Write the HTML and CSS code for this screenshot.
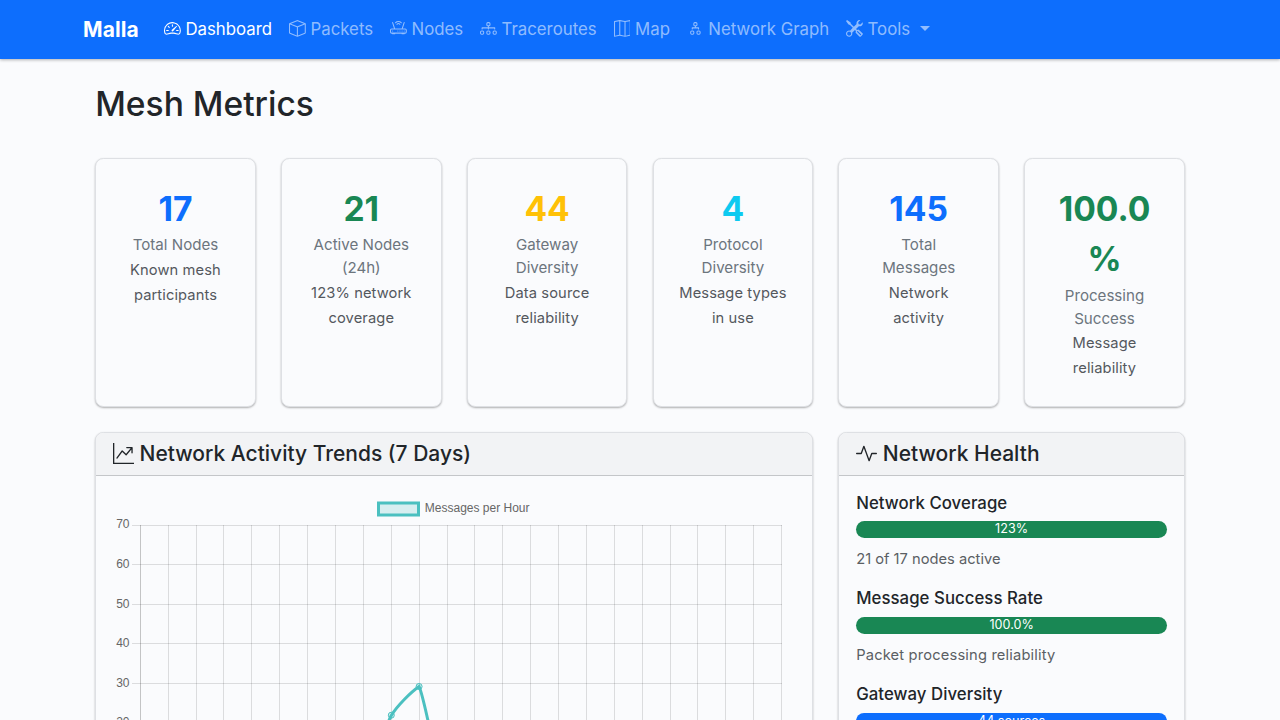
FILE: index.html
```html
<!DOCTYPE html>
<html lang="en">
<head>
<meta charset="utf-8">
<title>Malla - Mesh Metrics</title>
<link rel="stylesheet" href="styles.css">
</head>
<body>
<nav class="navbar">
  <div class="container navbar-inner">
    <a class="brand">Malla</a>
    <ul class="nav">
      <li class="nav-link active"><svg class="bi" viewBox="0 0 16 16"><path d="M8 4a.5.5 0 0 1 .5.5V6a.5.5 0 0 1-1 0V4.5A.5.5 0 0 1 8 4M3.732 5.732a.5.5 0 0 1 .707 0l.915.914a.5.5 0 1 1-.708.708l-.914-.915a.5.5 0 0 1 0-.707M2 10a.5.5 0 0 1 .5-.5h1.586a.5.5 0 0 1 0 1H2.5A.5.5 0 0 1 2 10m9.5 0a.5.5 0 0 1 .5-.5h1.5a.5.5 0 0 1 0 1H12a.5.5 0 0 1-.5-.5m.754-4.246a.39.39 0 0 0-.527-.02L7.547 9.31a.91.91 0 1 0 1.302 1.258l3.434-4.297a.39.39 0 0 0-.029-.518z"/><path fill-rule="evenodd" d="M0 10a8 8 0 1 1 15.547 2.661c-.442 1.253-1.845 1.602-2.932 1.25C11.309 13.488 9.475 13 8 13c-1.474 0-3.31.488-4.615.911-1.087.352-2.49.003-2.932-1.25A8 8 0 0 1 0 10m8-7a7 7 0 0 0-6.603 9.329c.203.575.923.876 1.68.63C4.397 12.533 6.358 12 8 12s3.604.532 4.923.96c.757.245 1.477-.056 1.68-.631A7 7 0 0 0 8 3"/></svg> Dashboard</li>
      <li class="nav-link"><svg class="bi" viewBox="0 0 16 16"><path d="M8.186 1.113a.5.5 0 0 0-.372 0L1.846 3.5 8 5.961 14.154 3.5zM15 4.239l-6.5 2.6v7.922l6.5-2.6V4.24zM7.5 14.762V6.838L1 4.239v7.923zM7.443.184a1.5 1.5 0 0 1 1.114 0l7.129 2.852A.5.5 0 0 1 16 3.5v8.662a1 1 0 0 1-.629.928l-7.185 2.874a.5.5 0 0 1-.372 0L.63 13.09a1 1 0 0 1-.63-.928V3.5a.5.5 0 0 1 .314-.464z"/></svg> Packets</li>
      <li class="nav-link"><svg class="bi" viewBox="0 0 16 16"><path d="M5.525 3.025a3.5 3.5 0 0 1 4.95 0 .5.5 0 1 0 .707-.707 4.5 4.5 0 0 0-6.364 0 .5.5 0 0 0 .707.707"/><path d="M6.94 4.44a1.5 1.5 0 0 1 2.12 0 .5.5 0 0 0 .708-.708 2.5 2.5 0 0 0-3.536 0 .5.5 0 0 0 .707.707ZM2.5 11a.5.5 0 1 1 0-1 .5.5 0 0 1 0 1m4.5-.5a.5.5 0 1 0 1 0 .5.5 0 0 0-1 0m2.5.5a.5.5 0 1 1 0-1 .5.5 0 0 1 0 1m1.5-.5a.5.5 0 1 0 1 0 .5.5 0 0 0-1 0m2 0a.5.5 0 1 0 1 0 .5.5 0 0 0-1 0"/><path d="M2.974 2.342a.5.5 0 1 0-.948.316L3.806 8H1.5A1.5 1.5 0 0 0 0 9.5v2A1.5 1.5 0 0 0 1.5 13H2a.5.5 0 0 0 .5.5h2A.5.5 0 0 0 5 13h6a.5.5 0 0 0 .5.5h2a.5.5 0 0 0 .5-.5h.5a1.5 1.5 0 0 0 1.5-1.5v-2A1.5 1.5 0 0 0 14.5 8h-2.306l1.78-5.342a.5.5 0 1 0-.948-.316L11.14 8H4.86zM14.5 9a.5.5 0 0 1 .5.5v2a.5.5 0 0 1-.5.5h-13a.5.5 0 0 1-.5-.5v-2a.5.5 0 0 1 .5-.5z"/></svg> Nodes</li>
      <li class="nav-link"><svg class="bi" viewBox="0 0 16 16"><path fill-rule="evenodd" d="M6 3.5A1.5 1.5 0 0 1 7.5 2h1A1.5 1.5 0 0 1 10 3.5v1A1.5 1.5 0 0 1 8.5 6v1H14a.5.5 0 0 1 .5.5v1a.5.5 0 0 1-1 0V8h-5v.5a.5.5 0 0 1-1 0V8h-5v.5a.5.5 0 0 1-1 0v-1A.5.5 0 0 1 2 7h5.5V6A1.5 1.5 0 0 1 6 4.5zM8.5 5a.5.5 0 0 0 .5-.5v-1a.5.5 0 0 0-.5-.5h-1a.5.5 0 0 0-.5.5v1a.5.5 0 0 0 .5.5zM0 11.5A1.5 1.5 0 0 1 1.5 10h1A1.5 1.5 0 0 1 4 11.5v1A1.5 1.5 0 0 1 2.5 14h-1A1.5 1.5 0 0 1 0 12.5zm1.5-.5a.5.5 0 0 0-.5.5v1a.5.5 0 0 0 .5.5h1a.5.5 0 0 0 .5-.5v-1a.5.5 0 0 0-.5-.5zm4.5.5A1.5 1.5 0 0 1 7.5 10h1a1.5 1.5 0 0 1 1.5 1.5v1A1.5 1.5 0 0 1 8.500 14h-1A1.5 1.5 0 0 1 6 12.500zm1.500-.5a.5.5 0 0 0-.5.5v1a.5.5 0 0 0 .5.5h1a.5.5 0 0 0 .5-.5v-1a.5.5 0 0 0-.5-.5zm4.500.5a1.5 1.5 0 0 1 1.500-1.500h1a1.500 1.500 0 0 1 1.500 1.500v1a1.500 1.500 0 0 1-1.500 1.500h-1a1.500 1.500 0 0 1-1.500-1.500zm1.500-.5a.5.5 0 0 0-.5.5v1a.5.5 0 0 0 .5.5h1a.5.5 0 0 0 .5-.5v-1a.5.5 0 0 0-.5-.5z"/></svg> Traceroutes</li>
      <li class="nav-link"><svg class="bi" viewBox="0 0 16 16"><path fill-rule="evenodd" d="M15.817.113A.5.5 0 0 1 16 .5v14a.5.5 0 0 1-.402.49l-5 1a.5.5 0 0 1-.196 0L5.500 15.010l-4.902.980A.5.5 0 0 1 0 15.500v-14a.5.5 0 0 1 .402-.490l5-1a.5.5 0 0 1 .196 0L10.500.990l4.902-.980a.5.5 0 0 1 .415.103M10 1.910l-4-.800v12.980l4 .800zm1 12.980 4-.800V1.110l-4 .800zm-6-.800V1.110l-4 .800v12.980z"/></svg> Map</li>
      <li class="nav-link"><svg class="bi" viewBox="0 0 16 16"><path fill-rule="evenodd" d="M6 3.5A1.5 1.5 0 0 1 7.5 2h1A1.5 1.5 0 0 1 10 3.5v1A1.5 1.5 0 0 1 8.500 6v1H11a.5.5 0 0 1 .5.5v1a.5.5 0 0 1-1 0V8h-5v.5a.5.5 0 0 1-1 0v-1A.5.5 0 0 1 5 7h2.500V6A1.5 1.5 0 0 1 6 4.500zM8.500 5a.5.5 0 0 0 .5-.5v-1a.5.5 0 0 0-.5-.5h-1a.5.5 0 0 0-.5.5v1a.5.5 0 0 0 .5.5zM3 11.500A1.500 1.500 0 0 1 4.500 10h1A1.500 1.500 0 0 1 7 11.500v1A1.500 1.500 0 0 1 5.500 14h-1A1.500 1.500 0 0 1 3 12.500zm1.500-.5a.5.5 0 0 0-.5.5v1a.5.5 0 0 0 .5.5h1a.5.5 0 0 0 .5-.5v-1a.5.5 0 0 0-.5-.5zm4.500.5a1.500 1.500 0 0 1 1.500-1.500h1a1.500 1.500 0 0 1 1.500 1.500v1a1.500 1.500 0 0 1-1.500 1.500h-1A1.500 1.500 0 0 1 9 12.500zm1.500-.5a.5.5 0 0 0-.5.5v1a.5.5 0 0 0 .5.5h1a.5.5 0 0 0 .5-.5v-1a.5.5 0 0 0-.5-.5z"/></svg> Network Graph</li>
      <li class="nav-link"><svg class="bi" viewBox="0 0 16 16"><path d="M1 0 0 1l2.200 3.081a1 1 0 0 0 .815.419h.070a1 1 0 0 1 .708.293l2.675 2.675-2.617 2.654A3.003 3.003 0 0 0 0 13a3 3 0 1 0 5.878-.851l2.654-2.617.968.968-.305.914a1 1 0 0 0 .242 1.023l3.270 3.270a.997.997 0 0 0 1.414 0l1.586-1.586a.997.997 0 0 0 0-1.414l-3.270-3.270a1 1 0 0 0-1.023-.242L10.500 9.500l-.960-.960 2.680-2.643A3.005 3.005 0 0 0 16 3q0-.405-.102-.777l-2.140 2.141L12 4l-.364-1.757L13.777.102a3 3 0 0 0-3.675 3.680L7.462 6.460 4.793 3.793a1 1 0 0 1-.293-.707v-.071a1 1 0 0 0-.419-.814zm9.646 10.646a.5.5 0 0 1 .708 0l2.914 2.915a.5.5 0 0 1-.707.707l-2.915-2.914a.5.5 0 0 1 0-.708M3 11l.471.242.529.026.287.445.445.287.026.529L5 13l-.242.471-.026.529-.445.287-.287.445-.529.026L3 15l-.471-.242L2 14.732l-.287-.445L1.268 14l-.026-.529L1 13l.242-.471.026-.529.445-.287.287-.445.529-.026z"/></svg> Tools <span class="caret"></span></li>
    </ul>
  </div>
</nav>
<main class="container">
  <div class="page">
    <h1 class="title">Mesh Metrics</h1>
    <div class="stats">
      <div class="card stat"><div class="num blue">17</div><div class="label">Total Nodes</div><div><small>Known mesh participants</small></div></div>
      <div class="card stat"><div class="num green">21</div><div class="label">Active Nodes (24h)</div><div><small>123% network coverage</small></div></div>
      <div class="card stat"><div class="num yellow">44</div><div class="label">Gateway Diversity</div><div><small>Data source reliability</small></div></div>
      <div class="card stat"><div class="num cyan">4</div><div class="label">Protocol Diversity</div><div><small>Message types in use</small></div></div>
      <div class="card stat"><div class="num blue">145</div><div class="label">Total Messages</div><div><small>Network activity</small></div></div>
      <div class="card stat"><div class="num green">100.0%</div><div class="label">Processing Success</div><div><small>Message reliability</small></div></div>
    </div>
    <div class="panels">
      <section class="card">
        <h5 class="card-header"><svg class="bi" viewBox="0 0 16 16"><path fill-rule="evenodd" d="M0 0h1v15h15v1H0zm10 3.500a.5.5 0 0 1 .5-.5h4a.5.5 0 0 1 .5.5v4a.5.5 0 0 1-1 0V4.900l-3.613 4.417a.5.5 0 0 1-.740.037L7.060 6.767l-3.656 5.027a.5.5 0 0 1-.808-.588l4-5.500a.5.5 0 0 1 .758-.060l2.609 2.610L13.445 4H10.500a.5.5 0 0 1-.5-.5"/></svg> Network Activity Trends (7 Days)</h5>
        <div class="card-body">
          <svg class="chart" width="683" height="336" viewBox="113 493 683 336">
            <rect x="378.5" y="503" width="40" height="12" fill="#4bc0c0" fill-opacity=".2" stroke="#4bc0c0" stroke-width="3"/>
            <g class="tick">
              <text x="424.800" y="512">Messages per Hour</text>
              <g text-anchor="end"><text x="129.500" y="528">70</text><text x="129.500" y="568">60</text><text x="129.500" y="608">50</text><text x="129.500" y="647">40</text><text x="129.500" y="687">30</text><text x="129.500" y="726">20</text></g>
            </g>
            <path class="grid" d="M132 525.5H782M132 564.5H782M132 604.5H782M132 643.5H782M132 683.5H782M132 722.5H782"/>
            <path class="grid" d="M168.500 525V802M196.500 525V802M223.500 525V802M251.500 525V802M279.500 525V802M307.500 525V802M335.500 525V802M363.500 525V802M391.500 525V802M419.500 525V802M447.500 525V802M474.500 525V802M502.500 525V802M530.500 525V802M558.500 525V802M586.500 525V802M614.500 525V802M642.500 525V802M670.500 525V802M697.500 525V802M725.500 525V802M753.500 525V802M781.500 525V802"/>
            <path class="grid axis" d="M140.500 525V802"/>
            <path d="M363.500 790C374 766 383 731 391.300 715.500C397 706 411 692 419.100 686.500C425 700 430 740 447 790" fill="none" stroke="#4bc0c0" stroke-width="3"/>
            <g fill="#4bc0c0" fill-opacity=".2" stroke="#4bc0c0"><circle cx="391.300" cy="715.200" r="3"/><circle cx="419.100" cy="686.500" r="3"/></g>
          </svg>
        </div>
      </section>
      <section class="card">
        <h5 class="card-header"><svg class="bi" viewBox="0 0 16 16"><path fill-rule="evenodd" d="M6 2a.5.5 0 0 1 .470.330L10 12.036l1.530-4.208A.5.5 0 0 1 12 7.500h3.500a.5.5 0 0 1 0 1h-3.150l-1.880 5.170a.5.5 0 0 1-.940 0L6 3.964 4.470 8.171A.5.5 0 0 1 4 8.500H.5a.5.5 0 0 1 0-1h3.150l1.880-5.170A.5.5 0 0 1 6 2"/></svg> Network Health</h5>
        <div class="card-body">
          <div class="metric"><h6>Network Coverage</h6><div class="bar bg-green">123%</div><div class="note"><small>21 of 17 nodes active</small></div></div>
          <div class="metric"><h6>Message Success Rate</h6><div class="bar bg-green">100.0%</div><div class="note spaced"><small>Packet processing reliability</small></div></div>
          <div class="metric"><h6>Gateway Diversity</h6><div class="bar bg-blue">44 sources</div><div class="note"><small>Data source reliability</small></div></div>
        </div>
      </section>
    </div>
  </div>
</main>
</body>
</html>
```
FILE: styles.css
```css
* { box-sizing: border-box; }
html { font-size: 16.8px; }
body {
  margin: 0;
  height: 720px;
  overflow: hidden;
  font-family: Inter, "Liberation Sans", sans-serif;
  font-size: 1rem;
  line-height: 1.5;
  color: #212529;
  background: #fafbfd;
}
h1, h5, h6 { margin: 0; font-weight: 500; line-height: 1.2; }
small { font-size: .875em; }
.bi { width: 1em; height: 1em; fill: currentColor; vertical-align: -.125em; }
.container { width: 1140px; margin: 0 auto; padding: 0 .75rem; }

.navbar {
  position: relative;
  padding: .5rem 0;
  background: #0d6efd;
  box-shadow: 0 1px 3px rgba(0, 0, 0, .3);
}
.navbar-inner { display: flex; align-items: center; }
.brand { margin-right: 1rem; padding-left: .5px; font-size: 1.25rem; font-weight: 700; letter-spacing: .05px; color: #fff; }
.nav { display: flex; margin: 0; padding: 0; list-style: none; letter-spacing: .02px; }
.nav-link { padding: .5rem; white-space: nowrap; color: rgba(255, 255, 255, .55); }
.nav-link.active { color: #fff; }
.caret {
  display: inline-block;
  margin-left: .3em;
  vertical-align: .255em;
  border-top: .3em solid;
  border-left: .3em solid transparent;
  border-right: .3em solid transparent;
}

.page { padding: 1.5rem .75rem 0; }
.title { margin-bottom: 2rem; font-size: 2rem; }
.stats { display: grid; grid-template-columns: repeat(6, 1fr); gap: 1.5rem; }
.card {
  min-width: 0;
  border: 1px solid #dee0e4;
  border-radius: .5rem;
  background: #fafbfd;
  box-shadow: 0 1px 2px rgba(0, 0, 0, .3);
}
.stat { padding: 1.5rem; text-align: center; }
.stat small { letter-spacing: .1px; color: #54585d; }
.num { font-size: 2rem; font-weight: 700; overflow-wrap: anywhere; }
.label { font-size: .9rem; color: #6c757d; }
.blue { color: #0d6efd; }
.green { color: #198754; }
.yellow { color: #ffc107; }
.cyan { color: #0dcaf0; }

.panels { display: grid; grid-template-columns: 718px 1fr; gap: 1.5rem; margin-top: 1.5rem; }
.card-header {
  padding: .5rem 1rem;
  border-bottom: 1px solid #c4c6c9;
  border-radius: .45rem .45rem 0 0;
  background: #f2f3f5;
  font-size: 1.25rem;
}
.card-body { padding: 1rem; }
.chart { display: block; }
.tick { font-family: "Liberation Sans", Arial, sans-serif; font-size: 12px; fill: #666; }
.grid { stroke: #000; stroke-opacity: .12; fill: none; }
.axis { stroke-opacity: .22; }
.metric { margin-bottom: 1rem; }
.metric h6 { margin-bottom: .5rem; font-size: 1rem; letter-spacing: .04px; }
.bar {
  height: 1rem;
  border-radius: .5rem;
  font-size: .75rem;
  line-height: 1rem;
  text-align: center;
  color: #fff;
}
.bg-green { background: #198754; }
.bg-blue { background: #0d6efd; }
.note { margin-top: .5rem; color: #5a5f64; }
.spaced { letter-spacing: .17px; }
```
